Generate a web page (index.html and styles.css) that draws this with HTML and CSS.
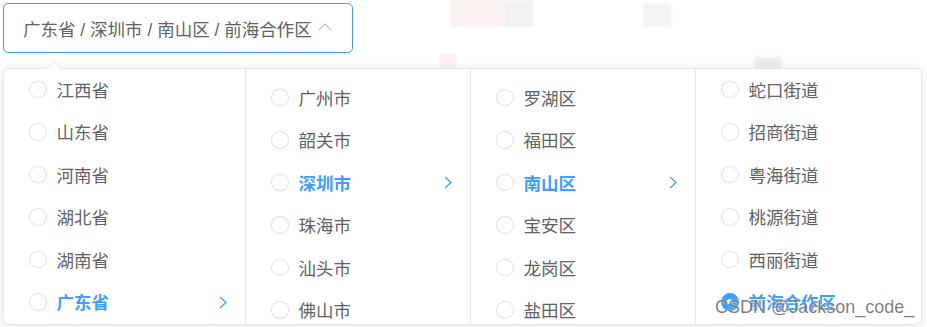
FILE: index.html
```html
<!DOCTYPE html>
<html lang="zh-CN">
<head>
    <meta charset="UTF-8">
    <meta name="viewport" content="width=device-width, initial-scale=1.0">
    <title>Cascader</title>
    <link rel="stylesheet" href="styles.css">
</head>
<body>
    <div class="backdrop">
        <span class="blot b1"></span>
        <span class="blot b2"></span>
        <span class="blot b3"></span>
        <span class="blot b4"></span>
        <span class="blot b5"></span>
    </div>

    <div class="page">
        <div class="cascader-input">
            <span class="value">广东省 / 深圳市 / 南山区 / 前海合作区</span>
            <svg class="arrow-up" width="14" height="8" viewBox="0 0 14 8"><polyline points="1,7 7,1 13,7" fill="none" stroke="#c0c4cc" stroke-width="1.3"/></svg>
        </div>

        <div class="dropdown">
            <span class="popper-arrow"></span>

            <div class="menu menu-wide scrolled">
                <div class="node"><span class="radio"></span><span class="label">江西省</span></div>
                <div class="node"><span class="radio"></span><span class="label">山东省</span></div>
                <div class="node"><span class="radio"></span><span class="label">河南省</span></div>
                <div class="node"><span class="radio"></span><span class="label">湖北省</span></div>
                <div class="node"><span class="radio"></span><span class="label">湖南省</span></div>
                <div class="node active"><span class="radio"></span><span class="label">广东省</span>
                    <svg class="chevron" width="8" height="13" viewBox="0 0 8 13"><polyline points="1,1 7,6.5 1,12" fill="none" stroke="#409eff" stroke-width="1.3"/></svg>
                </div>
            </div>

            <div class="menu">
                <div class="node"><span class="radio"></span><span class="label">广州市</span></div>
                <div class="node"><span class="radio"></span><span class="label">韶关市</span></div>
                <div class="node active"><span class="radio"></span><span class="label">深圳市</span>
                    <svg class="chevron" width="8" height="13" viewBox="0 0 8 13"><polyline points="1,1 7,6.5 1,12" fill="none" stroke="#409eff" stroke-width="1.3"/></svg>
                </div>
                <div class="node"><span class="radio"></span><span class="label">珠海市</span></div>
                <div class="node"><span class="radio"></span><span class="label">汕头市</span></div>
                <div class="node"><span class="radio"></span><span class="label">佛山市</span></div>
            </div>

            <div class="menu">
                <div class="node"><span class="radio"></span><span class="label">罗湖区</span></div>
                <div class="node"><span class="radio"></span><span class="label">福田区</span></div>
                <div class="node active"><span class="radio"></span><span class="label">南山区</span>
                    <svg class="chevron" width="8" height="13" viewBox="0 0 8 13"><polyline points="1,1 7,6.5 1,12" fill="none" stroke="#409eff" stroke-width="1.3"/></svg>
                </div>
                <div class="node"><span class="radio"></span><span class="label">宝安区</span></div>
                <div class="node"><span class="radio"></span><span class="label">龙岗区</span></div>
                <div class="node"><span class="radio"></span><span class="label">盐田区</span></div>
            </div>

            <div class="menu menu-last scrolled">
                <div class="node"><span class="radio"></span><span class="label">蛇口街道</span></div>
                <div class="node"><span class="radio"></span><span class="label">招商街道</span></div>
                <div class="node"><span class="radio"></span><span class="label">粤海街道</span></div>
                <div class="node"><span class="radio"></span><span class="label">桃源街道</span></div>
                <div class="node"><span class="radio"></span><span class="label">西丽街道</span></div>
                <div class="node active"><span class="radio checked"></span><span class="label">前海合作区</span></div>
            </div>

            <span class="watermark">CSDN @Jackson_code_</span>
        </div>
    </div>
</body>
</html>
```

FILE: styles.css
```css
body { margin: 0; background-color: #fff; font-family: 'Liberation Sans', 'Noto Sans CJK SC', sans-serif; color: #606266; overflow: hidden; }

/* blurred picture behind the popup */
.backdrop { position: absolute; top: 0; left: 0; width: 927px; height: 80px; filter: blur(1.5px); }
.blot { position: absolute; display: block; }
.b1 { left: 450px; top: 0; width: 55px; height: 27px; background-color: #faf1f1; }
.b2 { left: 505px; top: 0; width: 28px; height: 27px; background-color: #f1f1f1; }
.b3 { left: 643px; top: 3px; width: 28px; height: 24px; background-color: #f3f3f5; }
.b4 { left: 754px; top: 57px; width: 28px; height: 11px; background-color: #ececec; }
.b5 { left: 440px; top: 54px; width: 16px; height: 14px; background-color: #faf1f1; }

.page { position: relative; padding: 3px; }

.cascader-input { width: 350px; height: 50px; box-sizing: border-box; border: 1px solid #409eff; border-radius: 5px; background-color: #fff; display: flex; align-items: center; padding: 0 20px 0 19px; }
.cascader-input .value { font-size: 17.5px; color: #606266; white-space: nowrap; flex: 1; }
.arrow-up { margin-top: -2px; }

.dropdown { position: relative; display: flex; width: 919px; height: 257px; box-sizing: border-box; margin-top: 15px; border: 1px solid #e4e7ed; border-radius: 5px; background-color: #fff; box-shadow: 0 2px 12px 0 rgba(0, 0, 0, 0.1); }
.popper-arrow { position: absolute; left: 44px; top: -6px; width: 11px; height: 11px; background-color: #fff; border-top: 1px solid #e4e7ed; border-left: 1px solid #e4e7ed; transform: rotate(45deg); }

.menu { width: 225px; height: 255px; box-sizing: border-box; border-right: 1px solid #e4e7ed; padding-top: 7px; overflow: hidden; }
.menu-wide { width: 242px; }
.menu-last { border-right: none; }
.menu.scrolled { padding-top: 0; }
.menu.scrolled .node:first-child { margin-top: -1px; }

.node { position: relative; display: flex; align-items: center; height: 42.5px; padding-left: 25px; font-size: 17.5px; }
.node .radio { width: 17.5px; height: 17.5px; box-sizing: border-box; border: 1px solid #dcdfe6; border-radius: 50%; margin-right: 10px; flex-shrink: 0; position: relative; }
.node .radio.checked { border-color: #409eff; background-color: #409eff; }
.node .radio.checked::after { content: ''; position: absolute; left: 50%; top: 50%; width: 5px; height: 5px; margin: -2.5px 0 0 -2.5px; border-radius: 50%; background-color: #fff; }
.node .label { white-space: nowrap; }
.node.active .label { color: #409eff; font-weight: bold; }
.chevron { position: absolute; right: 18px; top: 15px; }

.watermark { position: absolute; left: 711px; top: 228px; font-family: 'Liberation Sans', sans-serif; font-size: 18px; color: rgba(90, 90, 90, 0.78); text-shadow: 0 0 2px #fff; white-space: nowrap; }
```
